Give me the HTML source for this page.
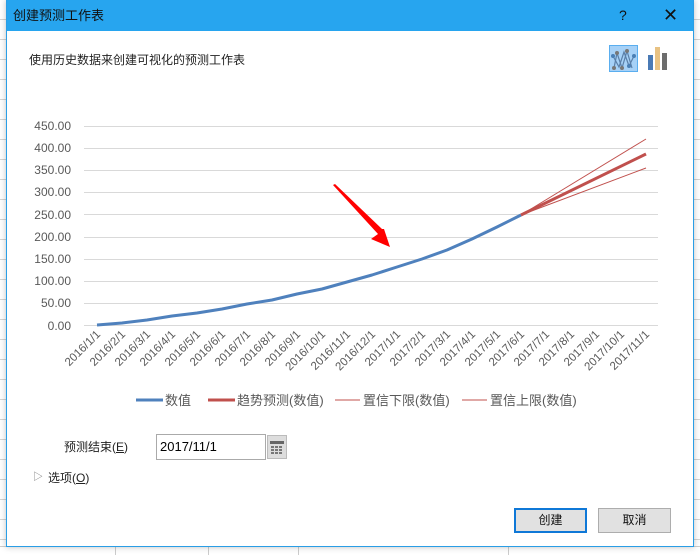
<!DOCTYPE html>
<html><head><meta charset="utf-8"><style>
body{margin:0;width:700px;height:555px;overflow:hidden;background:#fff;font-family:"Liberation Sans","Noto Sans CJK SC",sans-serif;position:relative}
.bg{position:absolute;inset:0;background:
repeating-linear-gradient(to bottom,transparent 0,transparent 19px,#d4d4d4 19px,#d4d4d4 20px);}
.dlg{position:absolute;left:6px;top:0;width:686px;height:546px;background:#fff;border:1px solid #2a9ee6;border-top:none;box-shadow:0 0 6px rgba(0,0,0,.25)}
.title{height:31px;background:#27a5ef;color:#111;font-size:13px;line-height:31px;padding-left:6px;position:relative}
.abs{position:absolute}
</style></head><body>
<div class="bg"></div>
<div class="abs" style="left:0;top:546px;width:700px;height:9px;background:#fff;border-top:1px solid #ccc"></div>
<div class="abs" style="left:115px;top:546px;width:1px;height:9px;background:#ccc"></div>
<div class="abs" style="left:208px;top:546px;width:1px;height:9px;background:#ccc"></div>
<div class="abs" style="left:298px;top:546px;width:1px;height:9px;background:#ccc"></div>
<div class="abs" style="left:508px;top:546px;width:1px;height:9px;background:#ccc"></div>
<div class="dlg">
 <div class="title">创建预测工作表<span class="abs" style="left:612px;top:0;font-size:14px">?</span><span class="abs" style="left:656px;top:0;font-size:18px">✕</span></div>
 <div class="abs" style="left:22px;top:51px;font-size:12px;color:#222">使用历史数据来创建可视化的预测工作表</div>
 <svg class="abs" style="left:601px;top:44px" width="80" height="30">
  <rect x="1.5" y="1.5" width="28" height="26" fill="#a6d1f7" stroke="#5aaeef"/>
  <polyline points="6,24 9,9 14,24 19,7 24,24" fill="none" stroke="#5a7fa8" stroke-width="1.2"/>
  <polyline points="5,12 11,23 16,8 21,22 26,12" fill="none" stroke="#5a7fa8" stroke-width="1.2"/>
  <circle cx="9" cy="9" r="2" fill="#777"/><circle cx="19" cy="7" r="2" fill="#777"/><circle cx="6" cy="24" r="2" fill="#777"/><circle cx="14" cy="24" r="2" fill="#777"/><circle cx="5" cy="12" r="2" fill="#4a7fb5"/><circle cx="26" cy="12" r="2" fill="#4a7fb5"/><circle cx="21" cy="22" r="2" fill="#4a7fb5"/>
  <rect x="40" y="11" width="5" height="15" fill="#4a7ab5"/><rect x="47" y="3" width="5" height="23" fill="#e8c283"/><rect x="54" y="9" width="5" height="17" fill="#6d6d6d"/>
 </svg>
 <svg class="abs" style="left:-6px;top:0" width="700" height="420" font-family="Liberation Sans,sans-serif">
  <g stroke="#d9d9d9" stroke-width="1">
   <line x1="83" x2="657" y1="126.5" y2="126.5"/><line x1="83" x2="657" y1="148.5" y2="148.5"/><line x1="83" x2="657" y1="170.5" y2="170.5"/><line x1="83" x2="657" y1="192.5" y2="192.5"/><line x1="83" x2="657" y1="214.5" y2="214.5"/><line x1="83" x2="657" y1="237.5" y2="237.5"/><line x1="83" x2="657" y1="259.5" y2="259.5"/><line x1="83" x2="657" y1="281.5" y2="281.5"/><line x1="83" x2="657" y1="303.5" y2="303.5"/><line x1="83" x2="657" y1="325.5" y2="325.5"/>
  </g>
  <g fill="#595959" font-size="12" text-anchor="end">
   <text x="70" y="130">450.00</text><text x="70" y="152">400.00</text><text x="70" y="174">350.00</text><text x="70" y="196">300.00</text><text x="70" y="219">250.00</text><text x="70" y="241">200.00</text><text x="70" y="263">150.00</text><text x="70" y="285">100.00</text><text x="70" y="307">50.00</text><text x="70" y="330">0.00</text>
  </g>
  <polyline fill="none" stroke="#4f81bd" stroke-width="3" stroke-linejoin="round" points="96,325 121,323 146,320 171,316 196,313 221,309 246,304 271,300 296,294 321,289 346,282 371,275 396,267 421,259 446,250 471,239 496,227 520,215"/>
  <polyline fill="none" stroke="#c0504d" stroke-width="1" points="520,215 645,139"/>
  <polyline fill="none" stroke="#c0504d" stroke-width="1" points="520,215 645,168"/>
  <polyline fill="none" stroke="#c0504d" stroke-width="3" points="520,215 645,154"/>
  <polygon fill="#ff0000" points="332,185 334,184 381,229 383,229 389,247 370,239 377,234" />
  <g fill="#595959" font-size="11.5" text-anchor="end">
   <text transform="translate(100,335) rotate(-45)">2016/1/1</text>
   <text transform="translate(125,335) rotate(-45)">2016/2/1</text>
   <text transform="translate(150,335) rotate(-45)">2016/3/1</text>
   <text transform="translate(175,335) rotate(-45)">2016/4/1</text>
   <text transform="translate(200,335) rotate(-45)">2016/5/1</text>
   <text transform="translate(225,335) rotate(-45)">2016/6/1</text>
   <text transform="translate(250,335) rotate(-45)">2016/7/1</text>
   <text transform="translate(275,335) rotate(-45)">2016/8/1</text>
   <text transform="translate(300,335) rotate(-45)">2016/9/1</text>
   <text transform="translate(325,335) rotate(-45)">2016/10/1</text>
   <text transform="translate(350,335) rotate(-45)">2016/11/1</text>
   <text transform="translate(375,335) rotate(-45)">2016/12/1</text>
   <text transform="translate(400,335) rotate(-45)">2017/1/1</text>
   <text transform="translate(425,335) rotate(-45)">2017/2/1</text>
   <text transform="translate(450,335) rotate(-45)">2017/3/1</text>
   <text transform="translate(475,335) rotate(-45)">2017/4/1</text>
   <text transform="translate(500,335) rotate(-45)">2017/5/1</text>
   <text transform="translate(524,335) rotate(-45)">2017/6/1</text>
   <text transform="translate(549,335) rotate(-45)">2017/7/1</text>
   <text transform="translate(574,335) rotate(-45)">2017/8/1</text>
   <text transform="translate(599,335) rotate(-45)">2017/9/1</text>
   <text transform="translate(624,335) rotate(-45)">2017/10/1</text>
   <text transform="translate(649,335) rotate(-45)">2017/11/1</text>
  </g>
  <g font-size="13" fill="#595959" font-family="Liberation Sans,Noto Sans CJK SC,sans-serif">
   <line x1="135" x2="162" y1="400" y2="400" stroke="#4f81bd" stroke-width="3"/><text x="164" y="405">数值</text>
   <line x1="207" x2="234" y1="400" y2="400" stroke="#c0504d" stroke-width="3"/><text x="236" y="405">趋势预测(数值)</text>
   <line x1="334" x2="359" y1="400" y2="400" stroke="#c0504d" stroke-width="1"/><text x="362" y="405">置信下限(数值)</text>
   <line x1="461" x2="486" y1="400" y2="400" stroke="#c0504d" stroke-width="1"/><text x="489" y="405">置信上限(数值)</text>
  </g>
 </svg>
 <div class="abs" style="left:57px;top:438px;font-size:12px;color:#222">预测结束(<u>E</u>)</div>
 <div class="abs" style="left:149px;top:434px;height:26px;width:110px;border:1px solid #aaa;font-size:13px;line-height:24px;padding-left:3px;box-sizing:border-box">2017/11/1</div>
 <div class="abs" style="left:260px;top:435px;width:20px;height:24px;background:#ddd;border:1px solid #bbb;box-sizing:border-box">
  <svg width="18" height="22"><rect x="2" y="5" width="14" height="3" fill="#666"/><g fill="#777"><rect x="3" y="10" width="3" height="2"/><rect x="7" y="10" width="3" height="2"/><rect x="11" y="10" width="3" height="2"/><rect x="3" y="13" width="3" height="2"/><rect x="7" y="13" width="3" height="2"/><rect x="11" y="13" width="3" height="2"/><rect x="3" y="16" width="3" height="2"/><rect x="7" y="16" width="3" height="2"/><rect x="11" y="16" width="3" height="2"/></g></svg>
 </div>
 <div class="abs" style="left:26px;top:468px;font-size:10px;color:#777">▷</div>
 <div class="abs" style="left:41px;top:469px;font-size:12px;color:#222">选项(<u>O</u>)</div>
 <div class="abs" style="left:507px;top:508px;width:73px;height:25px;border:2px solid #0f78d7;background:#e1e1e1;box-sizing:border-box;text-align:center;font-size:12px;line-height:21px;color:#111">创建</div>
 <div class="abs" style="left:591px;top:508px;width:73px;height:25px;border:1px solid #adadad;background:#e1e1e1;box-sizing:border-box;text-align:center;font-size:12px;line-height:23px;color:#111">取消</div>
</div>
</body></html>
